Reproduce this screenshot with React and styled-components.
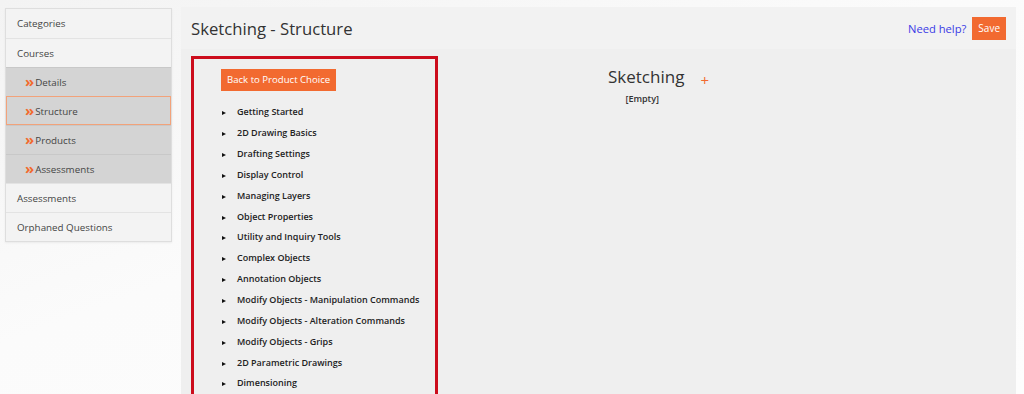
import React from 'react';
import styled, { createGlobalStyle } from 'styled-components';

const GlobalStyle = createGlobalStyle`
  html, body {
    margin: 0;
    padding: 0;
    height: 394px;
    overflow: hidden;
  }
  body {
    font-family: "Open Sans", "Liberation Sans", sans-serif;
    color: #333;
    background: linear-gradient(160deg, #f3f3f3 0%, #fbfbfb 45%, #fdfdfd 100%);
  }
`;

const Page = styled.div`
  display: flex;
  align-items: flex-start;
  gap: 9px;
  padding: 7px 8px 0 5px;
  height: 394px;
  box-sizing: border-box;
`;

const Sidebar = styled.ul`
  list-style: none;
  margin: 1px 0 0;
  padding: 0;
  width: 165px;
  flex-shrink: 0;
  border: 1px solid #dedede;
  box-shadow: 0 1px 2px rgba(0, 0, 0, 0.06);
`;

const NavItem = styled.li`
  display: flex;
  align-items: center;
  gap: 2px;
  height: 28px;
  padding-left: ${(p) => (p.$sub ? '19px' : '11px')};
  font-size: 9.8px;
  color: #444;
  background: ${(p) => (p.$sub ? '#d4d4d4' : '#f3f3f3')};
  border-top: 1px solid ${(p) => (p.$sub ? '#c8c8c8' : '#e3e3e3')};
  outline: ${(p) => (p.$active ? '1px solid #f2a27a' : 'none')};
  outline-offset: -1px;
  &:first-child {
    border-top: none;
    height: 29px;
  }
`;

const Chevron = styled.span`
  color: #f26a2e;
  font-weight: 700;
  font-size: 15px;
  line-height: 10px;
  margin-top: -2px;
  letter-spacing: -1px;
`;

const Main = styled.div`
  flex: 1;
  background: #efefef;
  height: 400px;
  display: flex;
  flex-direction: column;
`;

const Header = styled.div`
  display: flex;
  align-items: center;
  justify-content: space-between;
  height: 42px;
  padding: 0 10px;
  background: #f2f2f2;
`;

const Title = styled.h1`
  margin: 0;
  font-size: 16.7px;
  font-weight: 400;
  color: #333;
`;

const HeaderActions = styled.div`
  display: flex;
  align-items: center;
  gap: 6px;
`;

const HelpLink = styled.a`
  font-size: 11.2px;
  color: #3a3ae6;
  text-decoration: none;
`;

const OrangeButton = styled.button`
  border: none;
  background: #f26a30;
  color: #fff;
  font-family: inherit;
  font-size: ${(p) => (p.$small ? '10px' : '9.6px')};
  padding: 0 6px;
  height: ${(p) => (p.$small ? '23px' : '22px')};
  cursor: pointer;
`;

const Content = styled.div`
  display: flex;
  align-items: flex-start;
  padding: 7px 10px 0;
`;

const TreeBox = styled.div`
  width: 214px;
  height: 330px;
  border: 3px solid #cc0c1c;
  padding: 7px 0 0 27px;
  box-sizing: content-box;
  flex-shrink: 0;
  overflow: hidden;
`;

const TreeList = styled.ul`
  list-style: none;
  margin: 11px 0 0;
  padding: 0;
`;

const TreeItem = styled.li`
  display: flex;
  align-items: center;
  height: 20.85px;
  font-size: 9px;
  font-weight: 600;
  color: #222;
  white-space: nowrap;
  &::before {
    content: '';
    width: 0;
    height: 0;
    border-top: 2.5px solid transparent;
    border-bottom: 2.5px solid transparent;
    border-left: 4px solid #111;
    margin: 3px 11px 0 1px;
  }
`;

const Canvas = styled.div`
  padding: 9px 0 0 170px;
  display: flex;
  align-items: flex-start;
  gap: 16px;
`;

const Section = styled.div`
  display: flex;
  flex-direction: column;
  align-items: center;
`;

const SectionTitle = styled.div`
  font-size: 17px;
  color: #333;
  line-height: 24px;
`;

const EmptyNote = styled.div`
  font-size: 9px;
  font-weight: 600;
  color: #333;
  margin: 3px 8px 0 0;
`;

const AddMark = styled.span`
  color: #f26a30;
  font-size: 15px;
  line-height: 24px;
  margin-top: 3px;
`;

const navItems = [
  { label: 'Categories' },
  { label: 'Courses' },
  { label: 'Details', sub: true },
  { label: 'Structure', sub: true, active: true },
  { label: 'Products', sub: true },
  { label: 'Assessments', sub: true },
  { label: 'Assessments' },
  { label: 'Orphaned Questions' },
];

const chapters = [
  'Getting Started',
  '2D Drawing Basics',
  'Drafting Settings',
  'Display Control',
  'Managing Layers',
  'Object Properties',
  'Utility and Inquiry Tools',
  'Complex Objects',
  'Annotation Objects',
  'Modify Objects - Manipulation Commands',
  'Modify Objects - Alteration Commands',
  'Modify Objects - Grips',
  '2D Parametric Drawings',
  'Dimensioning',
];

export default function App() {
  return (
    <>
      <GlobalStyle />
      <Page>
        <Sidebar>
          {navItems.map((item, i) => (
            <NavItem key={i} $sub={item.sub} $active={item.active}>
              {item.sub && <Chevron>»</Chevron>}
              {item.label}
            </NavItem>
          ))}
        </Sidebar>
        <Main>
          <Header>
            <Title>Sketching - Structure</Title>
            <HeaderActions>
              <HelpLink href="#">Need help?</HelpLink>
              <OrangeButton $small>Save</OrangeButton>
            </HeaderActions>
          </Header>
          <Content>
            <TreeBox>
              <OrangeButton>Back to Product Choice</OrangeButton>
              <TreeList>
                {chapters.map((c) => (
                  <TreeItem key={c}>{c}</TreeItem>
                ))}
              </TreeList>
            </TreeBox>
            <Canvas>
              <Section>
                <SectionTitle>Sketching</SectionTitle>
                <EmptyNote>[Empty]</EmptyNote>
              </Section>
              <AddMark>+</AddMark>
            </Canvas>
          </Content>
        </Main>
      </Page>
    </>
  );
}
